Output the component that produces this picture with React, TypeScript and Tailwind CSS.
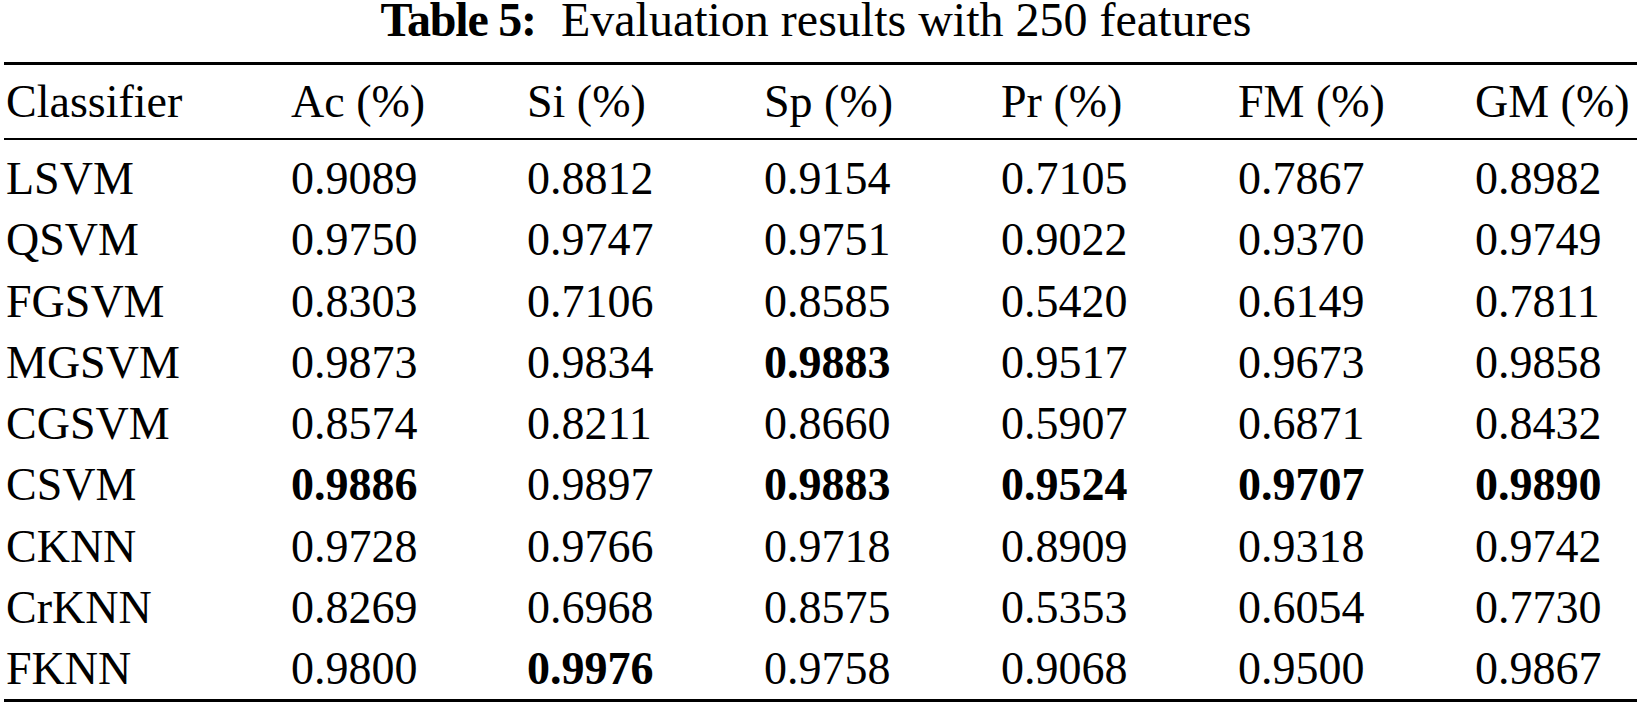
import React from "react";

const headers = ["Classifier", "Ac (%)", "Si (%)", "Sp (%)", "Pr (%)", "FM (%)", "GM (%)"];

type Cell = { v: string; b?: boolean };
const rows: Cell[][] = [
  [{ v: "LSVM" }, { v: "0.9089" }, { v: "0.8812" }, { v: "0.9154" }, { v: "0.7105" }, { v: "0.7867" }, { v: "0.8982" }],
  [{ v: "QSVM" }, { v: "0.9750" }, { v: "0.9747" }, { v: "0.9751" }, { v: "0.9022" }, { v: "0.9370" }, { v: "0.9749" }],
  [{ v: "FGSVM" }, { v: "0.8303" }, { v: "0.7106" }, { v: "0.8585" }, { v: "0.5420" }, { v: "0.6149" }, { v: "0.7811" }],
  [{ v: "MGSVM" }, { v: "0.9873" }, { v: "0.9834" }, { v: "0.9883", b: true }, { v: "0.9517" }, { v: "0.9673" }, { v: "0.9858" }],
  [{ v: "CGSVM" }, { v: "0.8574" }, { v: "0.8211" }, { v: "0.8660" }, { v: "0.5907" }, { v: "0.6871" }, { v: "0.8432" }],
  [{ v: "CSVM" }, { v: "0.9886", b: true }, { v: "0.9897" }, { v: "0.9883", b: true }, { v: "0.9524", b: true }, { v: "0.9707", b: true }, { v: "0.9890", b: true }],
  [{ v: "CKNN" }, { v: "0.9728" }, { v: "0.9766" }, { v: "0.9718" }, { v: "0.8909" }, { v: "0.9318" }, { v: "0.9742" }],
  [{ v: "CrKNN" }, { v: "0.8269" }, { v: "0.6968" }, { v: "0.8575" }, { v: "0.5353" }, { v: "0.6054" }, { v: "0.7730" }],
  [{ v: "FKNN" }, { v: "0.9800" }, { v: "0.9976", b: true }, { v: "0.9758" }, { v: "0.9068" }, { v: "0.9500" }, { v: "0.9867" }],
];

const grid = "grid grid-cols-[285px_236px_237px_237px_237px_237px_1fr] pl-[2px]";

export default function App() {
  return (
    <div
      className="w-[1637px] h-[708px] bg-white text-black overflow-hidden"
      style={{ fontFamily: '"Liberation Serif", "Times New Roman", serif' }}
    >
      <div className="flex justify-center pr-[5px] text-[48px] leading-[40px] whitespace-pre">
        <span className="font-bold tracking-[-1.2px]">Table 5:</span>
        <span className="ml-[25px]">Evaluation results with 250 features</span>
      </div>
      <div className="ml-[4px] mt-[22px]">
        <div className="h-[3px] bg-black" />
        <div className={`${grid} text-[46px] leading-[74px] h-[73px]`}>
          {headers.map((h) => (
            <div key={h}>{h}</div>
          ))}
        </div>
        <div className="h-[2px] bg-black" />
        <div className="pt-[8px]">
          {rows.map((r, i) => (
            <div key={i} className={`${grid} text-[46px] leading-[61.25px] h-[61.25px]`}>
              {r.map((c, j) => (
                <div key={j} className={c.b ? "font-bold" : ""}>
                  {c.v}
                </div>
              ))}
            </div>
          ))}
        </div>
        <div className="h-[3px] bg-black" />
      </div>
    </div>
  );
}
